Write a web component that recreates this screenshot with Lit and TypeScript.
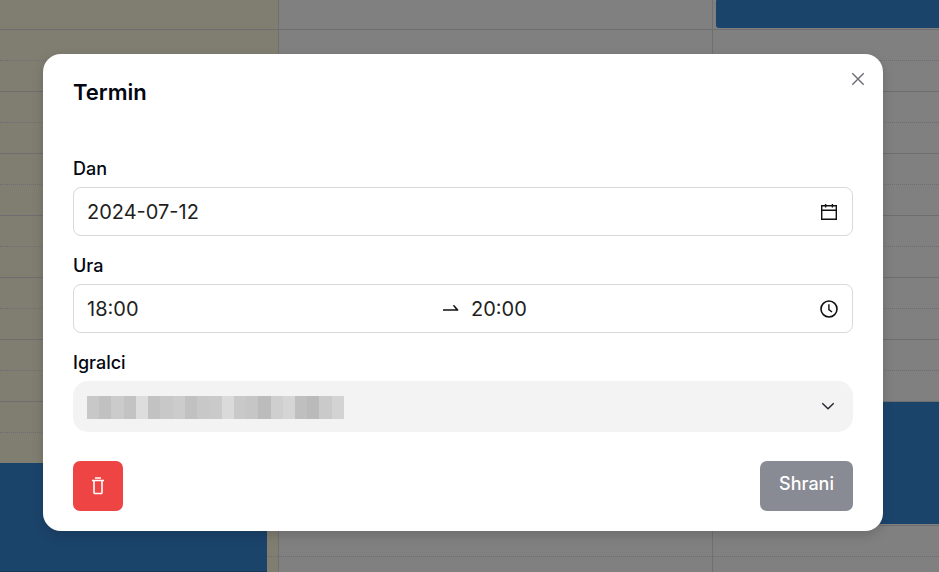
import { LitElement, html, css } from "lit";
import { customElement } from "lit/decorators.js";
import { styleMap } from "lit/directives/style-map.js";

const SLOTS = Array.from({ length: 19 }, (_, i) => i);

const REDACTED = [
  "#c8c8c8", "#c1c1c1", "#cbcbcb", "#c3c3c3", "#dddddd", "#c2c2c2", "#c8c8c8",
  "#cccccc", "#c1c1c1", "#c8c8c8", "#cacaca", "#dadada", "#c9c9c9", "#c6c6c6",
  "#bcbcbc", "#cfcfcf", "#d5d5d5", "#bfbfbf", "#bababa", "#cacaca", "#d3d3d3",
];

@customElement("week-column")
class WeekColumn extends LitElement {
  static styles = css`
    :host {
      display: block;
      position: relative;
      min-width: 0;
      box-sizing: border-box;
      border-right: 1px solid #707070;
    }
    :host(:last-child) {
      border-right: 0;
    }
    .slot {
      box-sizing: border-box;
      height: 31px;
      border-bottom: 1px dotted #6c6d74;
    }
    .slot:nth-of-type(odd) {
      border-bottom: 1px solid #6e6e70;
    }
  `;
  render() {
    return html`${SLOTS.map(() => html`<div class="slot"></div>`)}<slot></slot>`;
  }
}

@customElement("app-root")
export class AppRoot extends LitElement {
  static styles = css`
    :host {
      display: block;
      position: relative;
      min-height: 100vh;
      overflow: hidden;
      background: #808080;
      font-family: Inter, "Liberation Sans", sans-serif;
      color: #030712;
    }
    * {
      box-sizing: border-box;
    }
    .calendar {
      position: absolute;
      inset: -1px 0 0;
      display: grid;
      grid-template-columns: 279fr 434fr 226fr;
      overflow: hidden;
    }
    .today {
      background: #807e70;
    }
    .event {
      position: absolute;
      background: #1b446b;
      border-radius: 3px;
    }
    .event.evening {
      top: 464px;
      height: 109px;
      left: 0;
      right: 11px;
      border-radius: 0;
      border-bottom: 1px solid #17395a;
    }
    .event.morning {
      top: 0;
      height: 29px;
      left: 3px;
      right: -4px;
    }
    .event.late {
      top: 403px;
      height: 122px;
      left: 3px;
      right: -4px;
    }
    .overlay {
      position: relative;
      min-height: 100vh;
      display: flex;
      align-items: center;
      justify-content: center;
      padding: 13px 56px 0 43px;
    }
    .dialog {
      position: relative;
      width: 100%;
      max-width: 840px;
      padding: 20px 30px;
      background: #fff;
      border-radius: 18px;
      box-shadow: 0 4px 12px rgba(0, 0, 0, 0.16);
    }
    h1 {
      margin: 0 0 44px;
      font-size: 22px;
      line-height: 36px;
      font-weight: 600;
    }
    .close {
      position: absolute;
      top: 15px;
      right: 15px;
      width: 20px;
      height: 20px;
      padding: 0;
      border: 0;
      background: none;
      color: #6b6b76;
    }
    svg {
      display: block;
      flex: none;
      fill: none;
      stroke: currentColor;
    }
    .field {
      margin-bottom: 15px;
    }
    .label {
      display: block;
      margin-bottom: 3px;
      font-size: 18px;
      line-height: 30px;
      font-weight: 500;
    }
    .box {
      display: flex;
      align-items: center;
      height: 49px;
      padding: 0 13px;
      border: 1px solid #d9d9d9;
      border-radius: 8px;
      color: #111;
    }
    input {
      flex: 1;
      min-width: 0;
      width: 0;
      padding: 0;
      border: 0;
      outline: 0;
      background: none;
      font: 400 20px/30px Inter, "Liberation Sans", sans-serif;
      color: #1f1f1f;
    }
    .arrow {
      margin: 0 12px 0 8px;
    }
    .players {
      position: relative;
      margin-bottom: 29px;
    }
    select {
      display: block;
      width: 100%;
      height: 51px;
      padding: 0 40px 0 14px;
      border: 0;
      border-radius: 15px;
      appearance: none;
      background: #f3f3f3;
      font: 400 18px/28px Inter, "Liberation Sans", sans-serif;
    }
    .redacted {
      position: absolute;
      left: 14px;
      top: 15px;
      display: flex;
      width: 257px;
      height: 23px;
      pointer-events: none;
    }
    .redacted span {
      flex: 1;
    }
    .chevron {
      position: absolute;
      right: 17px;
      top: 17px;
      color: #27272f;
      pointer-events: none;
    }
    .actions {
      display: flex;
      justify-content: space-between;
    }
    .btn {
      display: flex;
      align-items: center;
      justify-content: center;
      height: 50px;
      border: 0;
      border-radius: 7px;
      color: #fff;
      font: 500 18px/28px Inter, "Liberation Sans", sans-serif;
    }
    .delete {
      width: 50px;
      padding: 0;
      background: #ef4444;
    }
    .save {
      padding: 0 19px 4px;
      background: #888a94;
    }
  `;

  render() {
    return html`
      <div class="calendar">
        <week-column class="today"><div class="event evening"></div></week-column>
        <week-column></week-column>
        <week-column>
          <div class="event morning"></div>
          <div class="event late"></div>
        </week-column>
      </div>
      <div class="overlay">
        <section class="dialog" role="dialog" aria-labelledby="title">
          <h1 id="title">Termin</h1>
          <button class="close" type="button" aria-label="Zapri">
            <svg width="20" height="20" viewBox="0 0 20 20" stroke-width="1.4">
              <path d="M4.3 4.3 15.7 15.7M15.7 4.3 4.3 15.7" />
            </svg>
          </button>
          <form @submit=${(e: Event) => e.preventDefault()}>
            <div class="field">
              <label class="label" for="day">Dan</label>
              <div class="box">
                <input id="day" type="text" value="2024-07-12" />
                <svg width="20" height="20" viewBox="0 0 20 20" stroke-width="1.4">
                  <path d="M2.7 3.7H17.3V17.3H2.7ZM2.7 8.3H17.3M6.6 2V5.6M13.4 2V5.6" />
                </svg>
              </div>
            </div>
            <div class="field">
              <label class="label" for="from">Ura</label>
              <div class="box">
                <input id="from" type="text" value="18:00" />
                <svg class="arrow" width="16" height="20" viewBox="0 0 16 20">
                  <path d="M0 10.2H12.8L9.6 6.3H11.5L15.4 10.8Q15.6 11.7 14.8 11.8H0Z" fill="currentColor" stroke="none" />
                </svg>
                <input type="text" value="20:00" aria-label="Ura do" />
                <svg width="20" height="20" viewBox="0 0 20 20" stroke-width="1.6">
                  <circle cx="10" cy="10" r="8" />
                  <path d="M9.9 5.2V10.6L13 13" stroke-width="1.4" />
                </svg>
              </div>
            </div>
            <label class="label" for="players">Igralci</label>
            <div class="players">
              <select id="players"><option></option></select>
              <div class="redacted">
                ${REDACTED.map((c) => html`<span style=${styleMap({ background: c })}></span>`)}
              </div>
              <svg class="chevron" width="16" height="16" viewBox="0 0 16 16" stroke-width="1.5">
                <path d="M2.3 5.2 8 10.8 13.7 5.2" />
              </svg>
            </div>
            <div class="actions">
              <button class="btn delete" type="button" aria-label="Izbriši">
                <svg width="18" height="18" viewBox="0 0 18 18">
                  <path d="M3 3.5H15M5 16.5H13" stroke-width="1.3" />
                  <path d="M6 1H12M5 4V16.5M13 4V16.5" stroke-width="1.6" />
                </svg>
              </button>
              <button class="btn save" type="submit">Shrani</button>
            </div>
          </form>
        </section>
      </div>
    `;
  }
}
